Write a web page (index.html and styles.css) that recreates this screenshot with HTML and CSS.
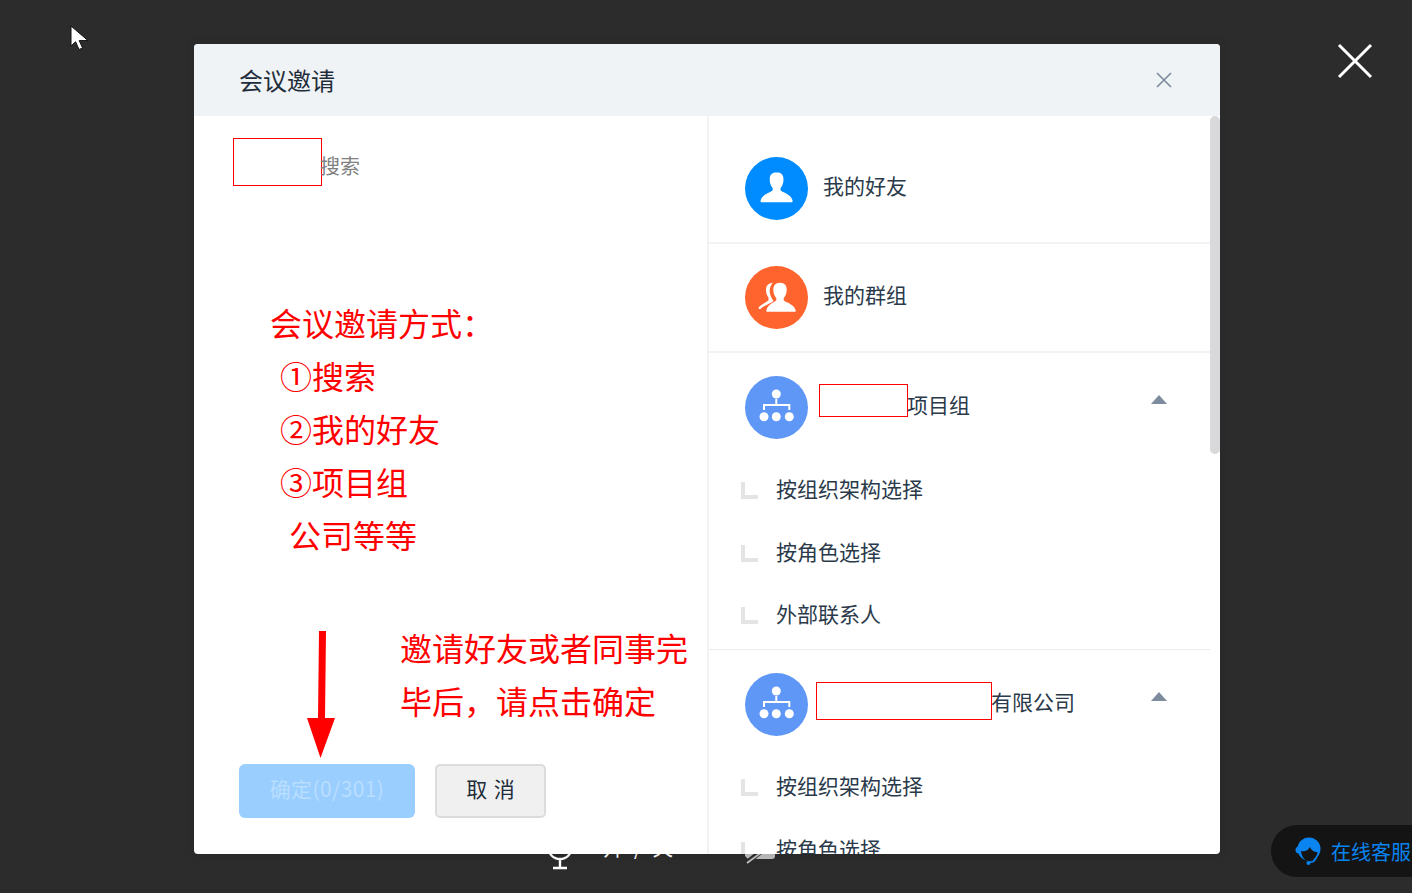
FILE: index.html
```html
<!DOCTYPE html>
<html lang="zh-CN">
<head>
<meta charset="utf-8">
<title>会议邀请</title>
<link rel="stylesheet" href="styles.css">
</head>
<body>
<div class="page">
  <svg class="cursor" width="20" height="28" viewBox="0 0 20 28"><path d="M1 1V21L5.600 16.800 9 24.500 12.600 23 9.200 15.600H18Z" fill="#fff" stroke="#111" stroke-width="1"/></svg>
  <svg class="overlay-close" width="36" height="36" viewBox="0 0 36 36"><path d="M2 2L34 34M34 2L2 34" stroke="#fff" stroke-width="3" fill="none"/></svg>

  <div class="under-bar">
    <svg class="mic" width="26" height="30" viewBox="0 0 26 30"><path d="M1 7a12 12 0 0 0 24 0M13 19v8M6 28h14" stroke="#fff" stroke-width="2.400" fill="none"/></svg>
    <span class="under-label">开/关</span>
    <svg class="chat" width="32" height="24" viewBox="0 0 32 24"><path d="M1 0H31V11a3 3 0 0 1-3 3H4L1 11Z" fill="#bdbdbd"/><path d="M0 20L20 4" stroke="#2c2c2c" stroke-width="5"/><path d="M3 18L18 7" stroke="#bdbdbd" stroke-width="2"/></svg>
  </div>

  <div class="service">
    <svg width="28" height="28" viewBox="0 0 28 28"><circle cx="14" cy="12" r="11.500" fill="#0a84f0"/><circle cx="4" cy="13" r="3.500" fill="#0a84f0"/><path d="M6 14c3 1 7 0 9-4 1 3 4 5 7.500 5 0 4-4 9-8.500 9-4 0-7.500-4-8-10Z" fill="#141414"/><path d="M22 19c-1 3.500-4 6.500-8 6.500" stroke="#0a84f0" stroke-width="1.500" fill="none"/><circle cx="13.500" cy="26" r="2" fill="#0a84f0"/></svg>
    <span>在线客服</span>
  </div>

  <section class="modal">
    <header class="modal-head">
      <h1 class="modal-title">会议邀请</h1>
      <svg class="modal-close" width="18" height="18" viewBox="0 0 18 18"><path d="M2 2L16 16M16 2L2 16" stroke="#7d8c9c" stroke-width="1.600" fill="none"/></svg>
    </header>
    <div class="modal-body">
      <div class="left">
        <div class="search">
          <span class="redact redact-search"></span>
          <span class="search-label">搜索</span>
        </div>
        <div class="actions">
          <button class="btn btn-primary" type="button">确定(0/301)</button>
          <button class="btn btn-cancel" type="button">取 消</button>
        </div>
        <div class="note note-ways">
          <p>会议邀请方式：</p>
          <p class="indent-1">①搜索</p>
          <p class="indent-1">②我的好友</p>
          <p class="indent-1">③项目组</p>
          <p class="indent-2">公司等等</p>
        </div>
        <div class="note note-confirm">
          <p>邀请好友或者同事完</p>
          <p>毕后，请点击确定</p>
        </div>
        <svg class="arrow" width="30" height="128" viewBox="0 0 30 128"><path d="M12 0H19L18 87H28L13.500 127L0 87H11Z" fill="#ff0000"/></svg>
      </div>
      <div class="right">
        <div class="list">
          <div class="row">
            <span class="avatar avatar-blue">
              <svg width="63" height="63" viewBox="0 0 63 63"><path d="M31.500 15.300c5 0 7 3 7 7 0 3.500-1 6.500-3 9v2c2.500 2.500 10 3.500 12 10 .3 1 0 2-1 2H16.700c-1 0-1.300-1-1-2 2-6.500 9.500-7.500 12-10v-2c-2-2.500-3-5.500-3-9 0-4 2-7 7-7Z" fill="#fff"/></svg>
            </span>
            <span class="row-label">我的好友</span>
          </div>
          <div class="row">
            <span class="avatar avatar-orange">
              <svg width="63" height="63" viewBox="0 0 63 63"><path d="M35 16.700c5 0 6.700 3 6.700 7 0 3-1 6-3 8.500v2c2.500 2.500 10 3.500 12 10 .2.800 0 1.500-1 1.500H22.300c-1 0-1.200-.7-1-1.500 2-6.500 7.500-7.500 10-10v-2c-2-2.500-3-5.500-3-8.500 0-4 2-7 6.700-7Z" fill="#fff"/><path d="M27.700 16.700c-4 .3-6.700 3-6.700 7 0 3 .8 5.500 2.500 8v2.500c-2 2-7 4-10 7.500-.3.800.8 1.500 2 1.300 2.500-3 9-5 12.500-7.500.5-.3.500-.7.200-1-2-3-3.500-6-3.500-9.300 0-3.500 1-6 3-8.500Z" fill="#fff"/></svg>
            </span>
            <span class="row-label">我的群组</span>
          </div>
          <div class="group">
            <div class="row row-head">
              <span class="avatar avatar-org">
                <svg width="63" height="63" viewBox="0 0 63 63"><circle cx="31.300" cy="18" r="4.500" fill="#fff"/><path d="M31.300 23v6M19 34v-5h25.300v5" stroke="#fff" stroke-width="2" fill="none"/><circle cx="19" cy="40.700" r="4.500" fill="#fff"/><circle cx="31.300" cy="40.700" r="4.500" fill="#fff"/><circle cx="44.300" cy="40.700" r="4.500" fill="#fff"/></svg>
              </span>
              <span class="redact redact-project"></span>
              <span class="row-label">项目组</span>
              <span class="caret"></span>
            </div>
            <div class="sub"><span class="corner"></span><span>按组织架构选择</span></div>
            <div class="sub"><span class="corner"></span><span>按角色选择</span></div>
            <div class="sub"><span class="corner"></span><span>外部联系人</span></div>
          </div>
          <div class="group">
            <div class="row row-head">
              <span class="avatar avatar-org">
                <svg width="63" height="63" viewBox="0 0 63 63"><circle cx="31.300" cy="18" r="4.500" fill="#fff"/><path d="M31.300 23v6M19 34v-5h25.300v5" stroke="#fff" stroke-width="2" fill="none"/><circle cx="19" cy="40.700" r="4.500" fill="#fff"/><circle cx="31.300" cy="40.700" r="4.500" fill="#fff"/><circle cx="44.300" cy="40.700" r="4.500" fill="#fff"/></svg>
              </span>
              <span class="redact redact-company"></span>
              <span class="row-label">有限公司</span>
              <span class="caret"></span>
            </div>
            <div class="sub"><span class="corner"></span><span>按组织架构选择</span></div>
            <div class="sub"><span class="corner"></span><span>按角色选择</span></div>
          </div>
        </div>
        <div class="scroll-thumb"></div>
      </div>
    </div>
  </section>
</div>
</body>
</html>
```

FILE: styles.css
```css
* { box-sizing: border-box; }
html, body { margin: 0; padding: 0; }
body {
  background: #2c2c2c;
  font-family: "Noto Sans CJK SC", "Liberation Sans", sans-serif;
}
.page {
  position: relative;
  width: 1412px;
  height: 893px;
  overflow: hidden;
  padding: 44px 0 0 194px;
}
.cursor { position: absolute; left: 70px; top: 25px; }
.overlay-close { position: absolute; left: 1337px; top: 43px; }

.under-bar { position: absolute; left: 0; top: 0; width: 100%; height: 100%; }
.mic { position: absolute; left: 547px; top: 840px; }
.under-label {
  position: absolute; left: 603px; top: 831px;
  color: #fff; font-size: 21px; letter-spacing: 10px; line-height: 30px;
}
.chat { position: absolute; left: 744px; top: 845px; }

.service {
  position: absolute; left: 1271px; top: 825px;
  width: 180px; height: 52px;
  padding-left: 24px;
  display: flex; align-items: center; gap: 8px;
  background: #141414;
  border-radius: 26px;
  color: #0a84f0;
  font-size: 20px;
}

.modal {
  position: relative;
  width: 1026px;
  height: 810px;
  background: #fff;
  border-radius: 4px;
  overflow: hidden;
  display: flex;
  flex-direction: column;
  box-shadow: 0 0 12px rgba(0, 0, 0, .12);
}
.modal-head {
  flex: none;
  height: 72px;
  padding: 0 47px 0 45px;
  background: #eff3f6;
  display: flex;
  align-items: center;
  justify-content: space-between;
}
.modal-title {
  margin: 0;
  font-size: 24px;
  font-weight: 400;
  line-height: 72px;
  color: #1f2d3a;
}
.modal-close { margin-top: -1px; }

.modal-body { flex: 1; min-height: 0; display: flex; }
.left {
  position: relative;
  flex: none;
  width: 515px;
  border-right: 2px solid #f2f2f2;
  padding: 22px 0 0 39px;
}
.search { display: flex; align-items: flex-start; }
.search-label {
  margin-left: -2px;
  margin-top: 4px;
  font-size: 20px;
  color: #808080;
  line-height: 48px;
}
.redact { display: block; flex: none; background: #fff; border: 1px solid #ff0000; }
.redact-search { width: 89px; height: 48px; }
.redact-project { width: 89px; height: 33px; margin: -14px 0 0 11px; }
.redact-company { width: 176px; height: 38px; margin: -7px 0 0 8px; }

.actions {
  position: absolute; left: 45px; top: 648px;
  display: flex; gap: 20px;
}
.btn {
  height: 54px;
  padding: 0 0 6px;
  font-family: inherit;
  font-size: 21px;
}
.btn-primary {
  width: 176px;
  background: #99ceff;
  color: #b9deff;
  border: 0;
  border-radius: 6px;
  letter-spacing: .4px;
}
.btn-cancel {
  width: 111px;
  background: #f0f0f0;
  color: #1f2d3a;
  border: 2px solid #dcdcdc;
  border-radius: 5px;
  word-spacing: 2px;
}

.note { position: absolute; color: #ff0000; font-size: 32px; line-height: 53px; white-space: nowrap; }
.note p { margin: 0; }
.note-ways { left: 76px; top: 180px; }
.indent-1 { padding-left: 10px; }
.indent-2 { padding-left: 19px; }
.note-confirm { left: 206px; top: 505px; }
.arrow { position: absolute; left: 113px; top: 515px; }

.right { position: relative; flex: 1; min-width: 0; overflow: hidden; }
.list { width: 501px; padding-top: 19px; }
.row {
  display: flex;
  align-items: center;
  height: 109px;
  padding-left: 36px;
  border-bottom: 2px solid #f2f2f2;
}
.row-head { height: auto; border-bottom: 0; padding: 23px 0 20px 36px; }
.group { border-bottom: 1px solid #ececec; padding-bottom: 2.500px; }
.group:last-child { border-bottom: 0; }
.avatar { flex: none; display: block; width: 63px; height: 63px; border-radius: 50%; }
.avatar svg { display: block; }
.avatar-blue { background: #008cff; }
.avatar-orange { background: #ff642e; }
.avatar-org { background: #5f97f7; }
.row-label { margin: -7px 0 0 15px; font-size: 21px; line-height: 30px; color: #2b3a4a; }
.redact + .row-label { margin-left: -1px; }
.caret {
  margin: -16px 43px 0 auto;
  width: 0; height: 0;
  border-left: 8px solid transparent;
  border-right: 8px solid transparent;
  border-bottom: 9px solid #7d8c9c;
}
.sub {
  display: flex;
  align-items: center;
  height: 62.500px;
  padding: 0 0 4px 32px;
  font-size: 21px;
  color: #2b3a4a;
}
.corner {
  flex: none;
  width: 17px; height: 17px;
  margin-right: 18px;
  margin-top: 5px;
  border-left: 4px solid #e4e4e4;
  border-bottom: 4px solid #e4e4e4;
}
.scroll-thumb {
  position: absolute; right: 0; top: 0;
  width: 10px; height: 338px;
  background: #d9d9dc;
  border-radius: 5px;
}
```
